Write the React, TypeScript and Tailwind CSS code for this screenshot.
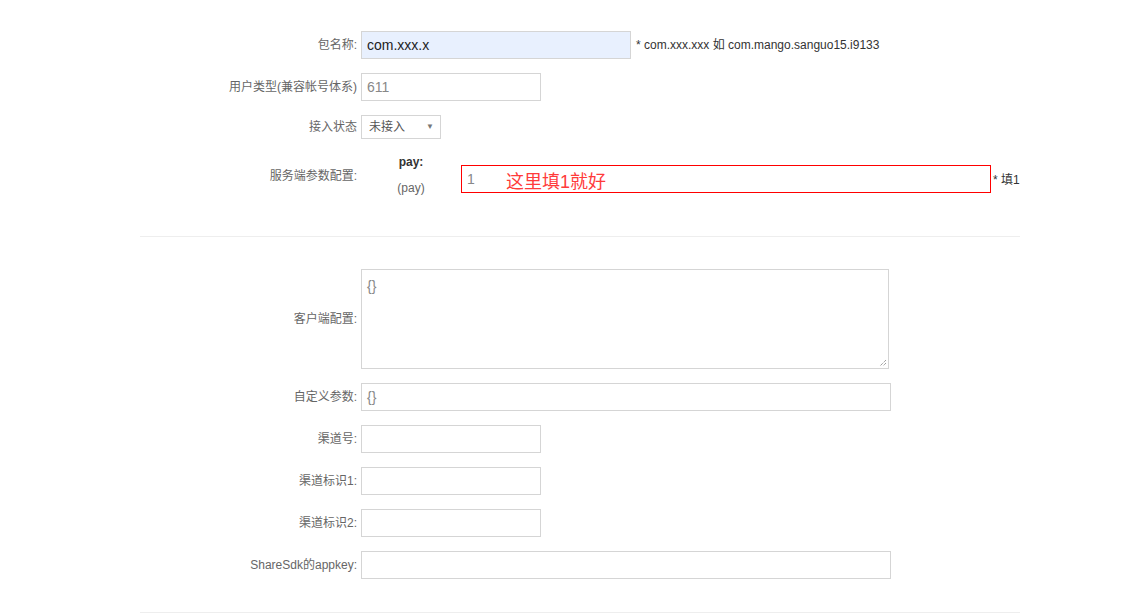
import React from "react";

const font = { fontFamily: '"Liberation Sans", "Noto Sans CJK SC", sans-serif' };

function Label({ children }: { children: React.ReactNode }) {
  return (
    <div className="w-[361px] shrink-0 pr-[4px] text-right text-[12px] text-[#666]">
      {children}
    </div>
  );
}

function TextInput({ width, value, blue }: { width: string; value?: string; blue?: boolean }) {
  return (
    <div
      className={`${width} h-[28px] flex items-center px-[5px] border border-[#d5d5d5] text-[14px] ${
        blue ? "bg-[#e8f0fe] text-[#222]" : "bg-white text-[#888]"
      }`}
    >
      {value}
    </div>
  );
}

export default function App() {
  return (
    <div className="min-h-screen bg-white pt-[31px]" style={font}>
      {/* 包名称 */}
      <div className="flex items-center h-[28px]">
        <Label>包名称:</Label>
        <TextInput width="w-[270px]" value="com.xxx.x" blue />
        <span className="ml-[5px] text-[12px] text-[#333]">* com.xxx.xxx 如 com.mango.sanguo15.i9133</span>
      </div>

      {/* 用户类型 */}
      <div className="flex items-center h-[28px] mt-[14px]">
        <Label>用户类型(兼容帐号体系)</Label>
        <TextInput width="w-[180px]" value="611" />
      </div>

      {/* 接入状态 */}
      <div className="flex items-center h-[24px] mt-[14px]">
        <Label>接入状态</Label>
        <div className="w-[80px] h-[24px] flex items-center justify-between pl-[7px] pr-[6px] border border-[#d5d5d5] text-[12px] text-[#555]">
          <span>未接入</span>
          <span className="text-[8px] text-[#777]">▼</span>
        </div>
      </div>

      {/* 服务端参数配置 */}
      <div className="flex items-start h-[48px] mt-[13px]">
        <div className="h-[48px] flex items-center">
          <Label>服务端参数配置:</Label>
        </div>
        <div className="w-[100px] text-center text-[12px]">
          <div className="h-[20px] leading-[20px] font-bold text-[#333]">pay:</div>
          <div className="h-[20px] leading-[20px] mt-[6px] text-[#666]">(pay)</div>
        </div>
        <div className="relative mt-[13px] w-[530px] h-[28px] flex items-center px-[5px] border border-[#ff0000] text-[14px] text-[#888]">
          1
          <span className="absolute left-[44px] top-[5px] text-[18px] leading-[22px] text-[#ff3b3b]">这里填1就好</span>
        </div>
        <span className="mt-[19px] ml-[2px] text-[12px] text-[#333]">* 填1</span>
      </div>

      <div className="ml-[140px] w-[880px] h-px bg-[#eeeeee] mt-[36px]" />

      {/* 客户端配置 */}
      <div className="flex items-center mt-[32px]">
        <Label>客户端配置:</Label>
        <div className="relative w-[528px] h-[100px] border border-[#d5d5d5] px-[5px] pt-[6px] text-[14px] text-[#888]">
          {"{}"}
          <svg className="absolute right-[1px] bottom-[1px]" width="9" height="9" viewBox="0 0 9 9">
            <path d="M8 2 L2 8 M8 5 L5 8" stroke="#777" strokeWidth="1" strokeDasharray="1 1" />
          </svg>
        </div>
      </div>

      {/* 自定义参数 */}
      <div className="flex items-center h-[28px] mt-[14px]">
        <Label>自定义参数:</Label>
        <TextInput width="w-[530px]" value="{}" />
      </div>

      <div className="flex items-center h-[28px] mt-[14px]">
        <Label>渠道号:</Label>
        <TextInput width="w-[180px]" />
      </div>

      <div className="flex items-center h-[28px] mt-[14px]">
        <Label>渠道标识1:</Label>
        <TextInput width="w-[180px]" />
      </div>

      <div className="flex items-center h-[28px] mt-[14px]">
        <Label>渠道标识2:</Label>
        <TextInput width="w-[180px]" />
      </div>

      <div className="flex items-center h-[28px] mt-[14px]">
        <Label>ShareSdk的appkey:</Label>
        <TextInput width="w-[530px]" />
      </div>

      <div className="ml-[140px] w-[880px] h-px bg-[#eeeeee] mt-[33px]" />
    </div>
  );
}
